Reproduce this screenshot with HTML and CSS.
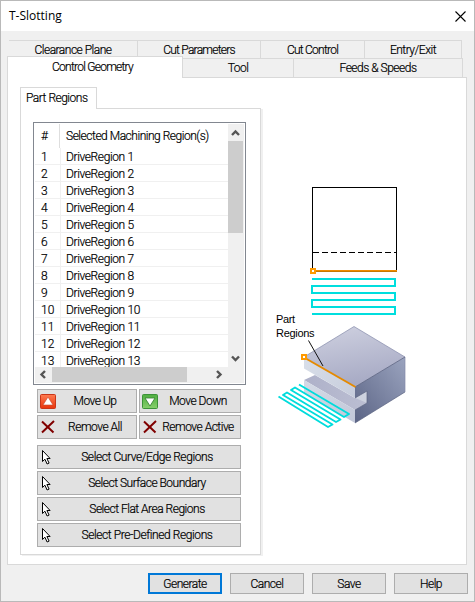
FILE: index.html
```html
<!DOCTYPE html>
<html lang="en">
<head>
<meta charset="utf-8">
<title>T-Slotting</title>
<link rel="stylesheet" href="styles.css">
</head>
<body>
<svg class="defs" width="0" height="0">
  <defs>
    <linearGradient id="red" x2="0" y2="1"><stop stop-color="#ff7b50"/><stop offset="1" stop-color="#e8340c"/></linearGradient>
    <linearGradient id="green" x2="0" y2="1"><stop stop-color="#4fae40"/><stop offset="1" stop-color="#87cf6c"/></linearGradient>
    <symbol id="cross" viewBox="0 0 14 14"><path d="M1 1.500 12.500 12.500M13 1 1 12.500" fill="none" stroke="#800000" stroke-width="2"/></symbol>
    <symbol id="cursor" viewBox="0 0 9 15"><path d="M.5.5v11l2.400-2.300 2.200 4.800 2-.9-2.200-4.600h3.200z" fill="#fff" stroke="#000" stroke-width="1"/></symbol>
  </defs>
</svg>
<div class="window">
  <header class="titlebar">
    <span class="title">T-Slotting</span>
    <svg class="close" width="11" height="11"><path d="M.5.5l10 10M10.500.500l-10 10" stroke="#000" stroke-width="1.1"/></svg>
  </header>
  <nav class="tabs back">
    <div class="tab"><span>Clearance Plane</span></div>
    <div class="tab"><span class="tight">Cut Parameters</span></div>
    <div class="tab"><span class="tight">Cut Control</span></div>
    <div class="tab"><span>Entry/Exit</span></div>
  </nav>
  <nav class="tabs front">
    <div class="tab active"><span class="tight">Control Geometry</span></div>
    <div class="tab"><span>Tool</span></div>
    <div class="tab"><span>Feeds &amp; Speeds</span></div>
  </nav>
  <main class="panel">
    <section class="regions">
      <div class="subtab"><span>Part Regions</span></div>
      <div class="group">
        <div class="list">
          <div class="rows">
            <div class="row head"><b>#</b><span>Selected Machining Region(s)</span></div>
            <div class="row"><b>1</b><span>DriveRegion 1</span></div>
            <div class="row"><b>2</b><span>DriveRegion 2</span></div>
            <div class="row"><b>3</b><span>DriveRegion 3</span></div>
            <div class="row"><b>4</b><span>DriveRegion 4</span></div>
            <div class="row"><b>5</b><span>DriveRegion 5</span></div>
            <div class="row"><b>6</b><span>DriveRegion 6</span></div>
            <div class="row"><b>7</b><span>DriveRegion 7</span></div>
            <div class="row"><b>8</b><span>DriveRegion 8</span></div>
            <div class="row"><b>9</b><span>DriveRegion 9</span></div>
            <div class="row"><b>10</b><span>DriveRegion 10</span></div>
            <div class="row"><b>11</b><span>DriveRegion 11</span></div>
            <div class="row"><b>12</b><span>DriveRegion 12</span></div>
            <div class="row"><b>13</b><span>DriveRegion 13</span></div>
          </div>
          <div class="vbar">
            <svg width="15" height="17"><path d="M4 11l3.500-3.500 3.500 3.500" class="chev"/></svg>
            <i></i>
            <svg width="15" height="17"><path d="M4 6.500l3.500 3.500 3.500-3.500" class="chev"/></svg>
          </div>
          <div class="hbar">
            <svg width="17" height="15"><path d="M10 4l-3.500 3.500 3.500 3.500" class="chev"/></svg>
            <i></i>
            <svg width="17" height="15"><path d="M7 4l3.500 3.500-3.500 3.500" class="chev"/></svg>
          </div>
        </div>
        <div class="pairs">
          <button><svg width="16" height="15"><rect x=".5" y=".5" width="15" height="14" rx="1" fill="url(#red)" stroke="#c93518"/><path d="M8 3l5 8H3z" fill="#fff" stroke="#c84428" stroke-width=".6"/></svg><span>Move Up</span></button>
          <button><svg width="16" height="15"><rect x=".5" y=".5" width="15" height="14" rx="1" fill="url(#green)" stroke="#3c9238"/><path d="M8 12L3 4h10z" fill="#fff" stroke="#2f7a2c" stroke-width=".8"/></svg><span>Move Down</span></button>
          <button><svg class="x" width="14" height="14"><use href="#cross"/></svg><span>Remove All</span></button>
          <button><svg class="x" width="14" height="14"><use href="#cross"/></svg><span>Remove Active</span></button>
        </div>
        <div class="selects">
          <button><svg width="9" height="15"><use href="#cursor"/></svg><span class="loose">Select Curve/Edge Regions</span></button>
          <button><svg width="9" height="15"><use href="#cursor"/></svg><span>Select Surface Boundary</span></button>
          <button><svg width="9" height="15"><use href="#cursor"/></svg><span>Select Flat Area Regions</span></button>
          <button><svg width="9" height="15"><use href="#cursor"/></svg><span class="loose">Select Pre-Defined Regions</span></button>
        </div>
      </div>
    </section>
    <svg class="diagram" width="150" height="260">
      <defs>
        <linearGradient id="top" x1="0" y1="0" x2=".3" y2="1"><stop stop-color="#d0d2e1"/><stop offset="1" stop-color="#a8abc5"/></linearGradient>
        <linearGradient id="side" x1="1" y1="0" x2="0" y2="1"><stop stop-color="#9ba4bf"/><stop offset="1" stop-color="#5b6485"/></linearGradient>
        <linearGradient id="face" x1="0" y1="0" x2="1" y2="1"><stop stop-color="#d9dfe9"/><stop offset="1" stop-color="#c2c8d9"/></linearGradient>
        <linearGradient id="floor"><stop stop-color="#aeb1c9"/><stop offset="1" stop-color="#bbbed2"/></linearGradient>
      </defs>
      <g fill="none" stroke="#000" shape-rendering="crispEdges">
        <path d="M47.500 94V12.500h84V95"/>
        <path d="M48 77.500h84" stroke-dasharray="6 3"/>
      </g>
      <path d="M51 96h81" stroke="#f08c00" stroke-width="2"/>
      <path d="M51 96.500h81" stroke="#c87800"/>
      <rect x="46" y="94" width="4" height="4" fill="#fff" stroke="#ff9a00" stroke-width="2"/>
      <path d="M47 104h83v7H47v7h83v7H47v7h83v7H47" fill="none" stroke="#00dede" stroke-width="2"/>
      <g transform="translate(0 135)">
        <path d="M39 47L89 16.500 140 47 90 77z" fill="url(#top)"/>
        <path d="M39 70l11-5 40 23 12-7v12l-12 7z" fill="url(#floor)"/>
        <path d="M90 88l12-7v12l-7-3z" fill="#cdd2df"/>
        <path d="M90 77l50-30v35l-50 31v-13l12-7V81l-12 7z" fill="url(#side)"/>
        <path d="M39 47l51 30v11L39 58.500zM39 70l51 30v13L39 83z" fill="url(#face)"/>
        <path d="M90 88l12-7v12l-12 7M90 113l50-31" fill="none" stroke="#59617f" stroke-width=".7"/>
        <path d="M39 47L89 16.500 140 47v35" fill="none" stroke="#858baa" stroke-width=".7"/>
        <path d="M90 77l50-30" stroke="#59617f" stroke-width=".8"/>
        <path d="M40 48l50.500 29" stroke="#e58a00" stroke-width="2"/>
        <rect x="37" y="45" width="4" height="4" fill="#fff" stroke="#ff9a00" stroke-width="2"/>
        <path d="M43.500 30.500L58 56" stroke="#111"/>
        <path d="M34 74.500l50 29.500-5 3L30 77.500l-4 2.500 49.500 29.500-4.500 2.500L22 82.500l-4 2.500 49.500 29.500-4.500 2.500-49.500-30.500" fill="none" stroke="#00dcdc" stroke-width="1.900" stroke-linejoin="round"/>
      </g>
      <text x="11" y="148" textLength="19">Part</text>
      <text x="11" y="162" textLength="38.500">Regions</text>
    </svg>
  </main>
  <footer class="actions">
    <button class="primary">Generate</button>
    <button>Cancel</button>
    <button>Save</button>
    <button>Help</button>
  </footer>
</div>
</body>
</html>
```
FILE: styles.css
```css
* { box-sizing: border-box; }
body { margin: 0; font: 300 12px/14px Roboto, "Liberation Sans", sans-serif; letter-spacing: -0.5px; color: #000; -webkit-text-stroke: 0.2px #000; }
.defs { position: absolute; }
span, b, button { white-space: nowrap; font-weight: 300; }
.tight { letter-spacing: -0.75px; }
.loose { letter-spacing: -0.42px; }
.window { width: 475px; height: 602px; background: #f0f0f0; border: 1px solid #b9b9b9; display: flex; flex-direction: column; }
.titlebar { height: 30px; background: #fff; display: flex; justify-content: space-between; align-items: center; padding: 0 8px; flex: none; }
.title { font: 12px/16px "Open Sans", sans-serif; letter-spacing: 0; -webkit-text-stroke: 0; }
.tabs { display: grid; }
.tab { border: 1px solid #d9d9d9; border-left: 0; border-bottom: 0; text-align: center; }
.back { margin: 9px 11px 0 8px; grid-template-columns: 129px 123px 104px 97px; height: 18px; }
.back .tab { padding-top: 2px; }
.front { margin: -2px 10px 0 6px; grid-template-columns: 176px 111px 169px; height: 21px; align-items: end; position: relative; }
.front .tab { height: 19px; background: #f0f0f0; padding-top: 2px; }
.front .active { height: 22px; background: #fff; border-left: 1px solid #d9d9d9; margin-bottom: -1px; padding: 3px 5px 0 0; position: relative; z-index: 2; }
.panel { margin-left: 6px; width: 460px; height: 488px; background: #fff; border: 1px solid #d9d9d9; display: flex; flex: none; padding: 9px 0 0 12px; }
.regions { width: 243px; flex: none; }
.subtab { width: 77px; height: 22px; border: 1px solid #d9d9d9; border-bottom: 0; background: #fff; padding: 3px 0 0 5px; position: relative; }
.group { width: 241px; height: 447px; margin-top: -1px; border: 1px solid #d9d9d9; box-shadow: 2px 1px 0 #f0f0f0; padding: 13px 0 0 12px; }
.list { width: 213px; height: 263px; border: 1px solid #828790; padding: 1px; display: grid; grid-template: 243px 16px / 193px 16px; background: #fff; }
.rows { overflow: hidden; }
.row { height: 17px; display: grid; grid-template-columns: 26px 1fr; border-bottom: 1px solid #f0f0f0; line-height: 18px; letter-spacing: -0.38px; }
.row b { padding-left: 6px; border-right: 1px solid #f0f0f0; height: 16px; letter-spacing: 0; }
.row span { padding-left: 5px; height: 16px; }
.head { height: 24px; line-height: 24px; border: 0; letter-spacing: -0.48px; }
.head b { border-color: #dedede; margin-right: 1px; height: 24px; }
.vbar { background: #f0f0f0; display: flex; flex-direction: column; }
.vbar i { height: 92px; width: 15px; background: #cdcdcd; }
.vbar svg:last-child { margin-top: auto; }
.hbar { background: #f0f0f0; grid-column: 1 / 3; display: flex; }
.hbar i { width: 135px; height: 15px; background: #cdcdcd; }
.hbar svg:last-child { margin-left: 23px; }
.chev { fill: none; stroke: #555; stroke-width: 2.4; }
button { font: inherit; letter-spacing: inherit; color: inherit; background: #e1e1e1; border: 1px solid #adadad; border-radius: 0; padding: 0; }
.pairs { width: 204px; margin: 4px 0 0 4px; display: grid; grid-template-columns: 100px 102px; gap: 2px; grid-auto-rows: 24px; }
.pairs button { display: grid; grid-template-columns: 18px 1fr; align-items: center; padding: 0 4px 0 2px; }
.pairs .x { margin-left: 1px; }
.selects { width: 204px; margin: 6px 0 0 4px; display: grid; grid-auto-rows: 24px; gap: 2px; }
.selects button { display: grid; grid-template-columns: 15px 1fr; align-items: center; padding: 0 3px 0 4px; }
.diagram { margin: 88px 0 0 2px; flex: none; }
.diagram text { font: 11px "Liberation Sans", sans-serif; letter-spacing: 0; -webkit-text-stroke: 0; }
.actions { display: flex; gap: 8px; padding: 8px 0 0 147px; }
.actions button { width: 74px; height: 21px; }
.actions .primary { border: 2px solid #0078d7; }
```
